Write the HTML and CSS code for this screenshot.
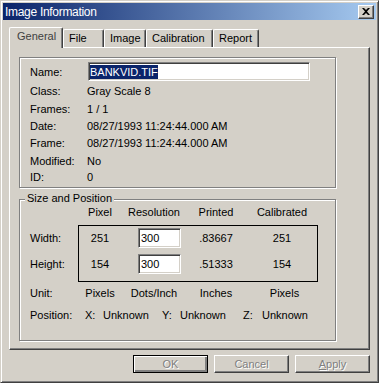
FILE: index.html
```html
<!DOCTYPE html>
<html>
<head>
<meta charset="utf-8">
<link rel="stylesheet" href="styles.css">
</head>
<body>
<div class="win">
  <div class="title">
    <span class="title-text">Image Information</span>
    <span class="close"><svg width="8" height="7" viewBox="0 0 8 7"><path d="M0 0h2l2 2 2-2h2L5 3.5 8 7H6L4 5 2 7H0l3-3.5z" fill="#000"/></svg></span>
  </div>
  <div class="body">
    <div class="tabs">
      <div class="tab sel">General</div>
      <div class="tab t-file">File</div>
      <div class="tab t-image">Image</div>
      <div class="tab t-cal">Calibration</div>
      <div class="tab t-rep">Report</div>
    </div>
    <div class="panel">
      <div class="info">
        <div>Name:</div><div><div class="namebox"><span class="seltext">BANKVID.TIF</span></div></div>
        <div>Class:</div><div>Gray Scale 8</div>
        <div>Frames:</div><div>1 / 1</div>
        <div>Date:</div><div>08/27/1993 11:24:44.000 AM</div>
        <div>Frame:</div><div>08/27/1993 11:24:44.000 AM</div>
        <div>Modified:</div><div>No</div>
        <div>ID:</div><div>0</div>
      </div>
      <div class="sp">
        <span class="legend">Size and Position</span>
        <div class="spgrid">
          <div class="box"></div>
          <div class="c r1 k2">Pixel</div>
          <div class="c r1 k3">Resolution</div>
          <div class="c r1 k4">Printed</div>
          <div class="c r1 k5">Calibrated</div>

          <div class="c r3 k1 lbl">Width:</div>
          <div class="c r3 k2">251</div>
          <div class="c r3 k3 inp"><div class="field">300</div></div>
          <div class="c r3 k4">.83667</div>
          <div class="c r3 k5">251</div>

          <div class="c r4 k1 lbl">Height:</div>
          <div class="c r4 k2">154</div>
          <div class="c r4 k3 inp"><div class="field">300</div></div>
          <div class="c r4 k4">.51333</div>
          <div class="c r4 k5">154</div>

          <div class="c r6 k1 lbl">Unit:</div>
          <div class="c r6 k2">Pixels</div>
          <div class="c r6 k3">Dots/Inch</div>
          <div class="c r6 k4">Inches</div>
          <div class="c r6 k5 shift">Pixels</div>
        </div>
        <div class="pos">
          <span>Position:</span><span>X:</span><span>Unknown</span><span>Y:</span><span>Unknown</span><span>Z:</span><span>Unknown</span>
        </div>
      </div>
    </div>
    <div class="buttons">
      <div class="btn def">OK</div>
      <div class="btn">Cancel</div>
      <div class="btn"><u>A</u>pply</div>
    </div>
  </div>
</div>
</body>
</html>
```

FILE: styles.css
```css
html, body {
  margin: 0;
  background: #d4d0c8;
}
body {
  font: 11px "Liberation Sans", Arial, sans-serif;
  color: #000;
}
.win {
  width: 379px;
  height: 383px;
  box-sizing: border-box;
  border: 1px solid;
  border-color: #d4d0c8 #404040 #404040 #d4d0c8;
  box-shadow: inset 1px 1px 0 #fff, inset -1px -1px 0 #808080;
  padding: 2px;
}
.title {
  height: 17px;
  display: flex;
  align-items: center;
  justify-content: space-between;
  background: linear-gradient(to right, #0a246a, #a6caf0);
  color: #fff;
  padding: 0 2px;
}
.title-text {
  font-size: 12px;
  letter-spacing: -0.3px;
}
.close {
  width: 16px;
  height: 14px;
  box-sizing: border-box;
  background: #d4d0c8;
  border: 1px solid;
  border-color: #fff #404040 #404040 #fff;
  box-shadow: inset -1px -1px 0 #808080;
  display: flex;
  align-items: center;
  justify-content: center;
}
.close svg { display: block; margin: 0 1px 1px 0; }
.body {
  padding: 0 6px;
}
.tabs {
  height: 27px;
  display: flex;
  align-items: flex-end;
}
.tab {
  height: 18px;
  box-sizing: border-box;
  border: 1px solid;
  border-bottom: none;
  border-color: #fff #404040 #404040 #fff;
  box-shadow: inset -1px 0 0 #808080;
  border-radius: 2px 2px 0 0;
  padding: 2px 0 0 5px;
  line-height: 13px;
}
.tab.sel {
  height: 21px;
  width: 54px;
  padding-left: 7px;
  margin-bottom: -1px;
  background: #d4d0c8;
  position: relative;
  z-index: 1;
  color: #404040;
}
.t-file { width: 41px; }
.t-image { width: 42px; }
.t-cal { width: 67px; }
.t-rep { width: 46px; }
.panel {
  height: 303px;
  box-sizing: border-box;
  border: 1px solid;
  border-color: #fff #404040 #404040 #fff;
  box-shadow: inset -1px -1px 0 #808080;
  padding: 9px 0 0 9px;
}
.info, .sp {
  width: 317px;
  box-sizing: border-box;
  border: 1px solid #808080;
  box-shadow: 1px 1px 0 #fff, inset 1px 1px 0 #fff;
}
.info {
  height: 131px;
  display: grid;
  grid-template-columns: 57px auto;
  grid-template-rows: 19px 19px 17px 17px 18px 18px 13px;
  align-content: start;
  padding: 4px 0 0 10px;
}
.info > div {
  display: flex;
  align-items: center;
  white-space: nowrap;
}
.namebox {
  width: 222px;
  height: 19px;
  box-sizing: border-box;
  margin-left: 1px;
  border: 1px solid;
  border-color: #808080 #fff #fff #808080;
  box-shadow: inset 1px 1px 0 #404040, inset -1px -1px 0 #d4d0c8;
  background: #fff;
  padding-left: 1px;
  display: flex;
  align-items: center;
}
.seltext {
  background: #0a246a;
  color: #fff;
  line-height: 14px;
}
.sp {
  height: 142px;
  margin-top: 11px;
}
.legend {
  display: block;
  width: max-content;
  margin: -8px 0 0 5px;
  padding: 0 2px;
  background: #d4d0c8;
  line-height: 13px;
}
.spgrid {
  display: grid;
  grid-template-columns: 48px 44px 64px 60px 72px;
  grid-template-rows: 14px 6px 26px 26px 5px 22px;
  margin-left: 10px;
}
.box {
  grid-column: 2 / 6;
  grid-row: 3 / 6;
  border: 1px solid #000;
}
.c {
  display: flex;
  align-items: center;
  justify-content: center;
  white-space: nowrap;
}
.lbl { justify-content: flex-start; }
.r1 { grid-row: 1; }
.r3 { grid-row: 3; }
.r4 { grid-row: 4; }
.r6 { grid-row: 6; }
.k1 { grid-column: 1; }
.k2 { grid-column: 2; }
.k3 { grid-column: 3; }
.k4 { grid-column: 4; }
.k5 { grid-column: 5; }
.shift { padding-left: 5px; }
.inp { justify-content: flex-start; padding-left: 16px; }
.field {
  width: 43px;
  height: 20px;
  box-sizing: border-box;
  border: 1px solid;
  border-color: #808080 #fff #fff #808080;
  box-shadow: inset 1px 1px 0 #404040, inset -1px -1px 0 #d4d0c8;
  background: #fff;
  padding-left: 2px;
  display: flex;
  align-items: center;
}
.pos {
  display: grid;
  grid-template-columns: 55px 18px 59px 18px 63px 19px auto;
  height: 22px;
  align-items: center;
  margin-left: 10px;
}
.buttons {
  display: flex;
  justify-content: flex-end;
  gap: 6px;
  margin-top: 5px;
}
.btn {
  width: 75px;
  height: 18px;
  box-sizing: border-box;
  border: 1px solid;
  border-color: #fff #404040 #404040 #fff;
  box-shadow: inset -1px -1px 0 #808080;
  display: flex;
  align-items: center;
  justify-content: center;
  color: #808080;
  text-shadow: 1px 1px 0 #fff;
}
.btn.def {
  border: 1px solid #000;
  box-shadow: inset 1px 1px 0 #fff, inset -2px -2px 0 #808080, inset -1px -1px 0 #404040;
}
```
